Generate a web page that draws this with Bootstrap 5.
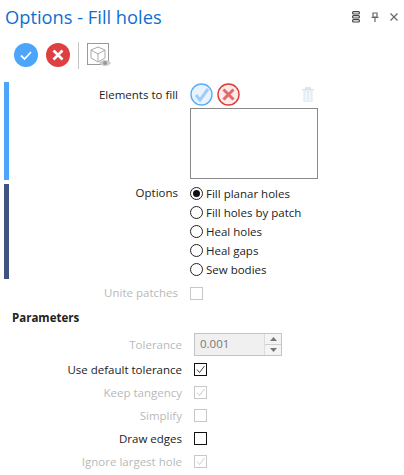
<!DOCTYPE html>
<html lang="en">
<head>
    <meta charset="UTF-8">
    <meta name="viewport" content="width=device-width, initial-scale=1.0">
    <title>Options - Fill holes</title>
    <link href="https://cdn.jsdelivr.net/npm/bootstrap@5.3.0/dist/css/bootstrap.min.css" rel="stylesheet">
    <style>
        body {
            background: #fff;
            color: #222;
            font-family: "Open Sans", "Noto Sans", sans-serif;
            font-size: 11.5px;
            overflow: hidden;
        }
        .pane { width: 404px; height: 475px; overflow: hidden; }
        .pane-head { height: 33px; padding: 0 6px 0 5px; }
        .pane-title { color: #0f6fd0; font-size: 18.3px; line-height: 33px; margin: 0; font-weight: 400; }
        .pane-tools { gap: 11px; }
        .tool-row { height: 44px; padding-left: 14px; margin-bottom: 5px; }
        .tool-sep { width: 1px; height: 27px; background: #c4c4c4; margin: 0 8px 0 8px; }
        .section-blue, .section-navy { margin-left: 4px; border-left: 5px solid; }
        .section-blue { border-color: #4aa5fb; height: 98px; margin-bottom: 4px; }
        .section-navy { border-color: #3f5580; height: 95px; }
        .label-col { width: 169px; text-align: right; flex: none; }
        .label-col2 { width: 182px; text-align: right; flex: none; }
        .label-unite { width: 178px; text-align: right; flex: none; }
        .ctrl-col { margin-left: 12px; }
        .pick-row { width: 128px; height: 25px; }
        .trash-icon { margin-right: 3px; }
        .opt-row { height: 19px; }
        .radio-mark { width: 13px; height: 13px; border: 1px solid #222; border-radius: 50%; flex: none; margin-right: 3px; display: flex; align-items: center; justify-content: center; }
        .radio-mark.on::after { content: ""; width: 7px; height: 7px; border-radius: 50%; background: #111; }
        .list-box { width: 128px; height: 71px; border: 1px solid #8a8a8a; margin-top: 1px; }
        .dim { color: #b9b9b9; }
        .check-mark { width: 13px; height: 13px; border: 1px solid #111; display: flex; flex: none; margin-left: 12px; }
        .check-mark.off { border-color: #c8c8c8; }
        .unite-row { height: 16px; margin-top: 6px; }
        .section-name { font-weight: 700; padding-left: 12px; height: 20px; line-height: 20px; margin-top: 7px; margin-bottom: 5px; }
        .param-row { height: 23px; }
        .param-first { margin-bottom: 2px; }
        .spin-box { width: 88px; height: 23px; margin-left: 12px; border: 1px solid #c4c4c4; background: #f0f0f0; color: #777; padding-left: 5px; line-height: 20px; }
        .spin-btns { width: 17px; border-left: 1px solid #dcdcdc; background: #f4f4f4; }
        .spin-btns span { flex: 1; display: flex; align-items: center; justify-content: center; }
        .spin-btns span + span { border-top: 1px solid #d0d0d0; }
    </style>
</head>
<body>
<div class="pane">
    <div class="pane-head d-flex align-items-center justify-content-between">
        <h1 class="pane-title">Options - Fill holes</h1>
        <div class="pane-tools d-flex align-items-center">
            <svg width="8" height="12" viewBox="0 0 8 12"><g fill="none" stroke="#444" stroke-width="1.2"><rect x=".6" y=".6" width="6.8" height="2.4" rx="1"/><rect x=".6" y="4.6" width="6.8" height="2.4" rx="1"/><rect x=".6" y="8.6" width="6.8" height="2.4" rx="1"/></g></svg>
            <svg width="8" height="10" viewBox="0 0 8 10"><path d="M2 1h4v4H2zM.5 5.5h7M4 5.5V10" fill="none" stroke="#666" stroke-width="1.2"/></svg>
            <svg width="8" height="8" viewBox="0 0 8 8"><path d="M.5.5l7 7M7.5.5l-7 7" stroke="#666" stroke-width="1.2"/></svg>
        </div>
    </div>

    <div class="tool-row d-flex align-items-center">
        <svg width="24" height="24" viewBox="0 0 24 24" class="me-2"><circle cx="12" cy="12" r="12" fill="#4aa5fb"/><path d="M7 12.5l3.5 3.5L17 9" fill="none" stroke="#fff" stroke-width="1.8"/></svg>
        <svg width="24" height="24" viewBox="0 0 24 24"><circle cx="12" cy="12" r="12" fill="#dd4040"/><path d="M7.5 7.5l9 9M16.5 7.5l-9 9" stroke="#fff" stroke-width="2.6"/></svg>
        <div class="tool-sep"></div>
        <svg width="25" height="26" viewBox="0 0 25 26"><rect x=".5" y="1.5" width="21" height="21" fill="none" stroke="#999"/><path d="M11 5l7 3v8l-7 4-7-4V8zM4 8l7 4 7-4M11 12v8" fill="none" stroke="#aaa"/><path d="M12 21c3-4 9-4 12 0-3 4-9 4-12 0z" fill="#ccc"/><circle cx="18" cy="21" r="2" fill="#999"/></svg>
    </div>

    <div class="section-blue d-flex">
        <div class="label-col pt-1">Elements to fill</div>
        <div class="ctrl-col">
            <div class="pick-row d-flex align-items-center">
                <svg width="23" height="23" viewBox="0 0 23 23"><circle cx="11.5" cy="11.5" r="10.5" fill="#e8f3fe" stroke="#5aaefb" stroke-width="1.4"/><path d="M6 12l4 5 8-11" fill="none" stroke="#9fcdf8" stroke-width="3"/></svg>
                <svg width="23" height="23" viewBox="0 0 23 23" class="ms-1"><circle cx="11.5" cy="11.5" r="10.5" fill="#fdeaea" stroke="#dd3a3a" stroke-width="1.4"/><path d="M6.5 6.5l10 10M16.5 6.5l-10 10" stroke="#e46a6a" stroke-width="3"/></svg>
                <svg width="14" height="17" viewBox="0 0 15 18" class="ms-auto trash-icon"><path d="M1 4h13M5 4V2h5v2" fill="none" stroke="#d6dee8" stroke-width="1.5"/><path d="M2.5 5h10v12h-10z" fill="#e6edf5"/><path d="M5.5 6v10M9.5 6v10" stroke="#fff"/></svg>
            </div>
            <div class="list-box"></div>
        </div>
    </div>

    <div class="section-navy d-flex">
        <div class="label-col"><div class="opt-row">Options</div></div>
        <div class="ctrl-col">
            <div class="opt-row d-flex align-items-center"><span class="radio-mark on"></span>Fill planar holes</div>
            <div class="opt-row d-flex align-items-center"><span class="radio-mark"></span>Fill holes by patch</div>
            <div class="opt-row d-flex align-items-center"><span class="radio-mark"></span>Heal holes</div>
            <div class="opt-row d-flex align-items-center"><span class="radio-mark"></span>Heal gaps</div>
            <div class="opt-row d-flex align-items-center"><span class="radio-mark"></span>Sew bodies</div>
        </div>
    </div>

    <div class="unite-row d-flex align-items-center">
        <div class="label-unite dim">Unite patches</div>
        <span class="check-mark off"></span>
    </div>

    <div class="section-name">Parameters</div>

    <div class="param-row param-first d-flex align-items-center">
        <div class="label-col2 dim">Tolerance</div>
        <div class="spin-box d-flex justify-content-between">
            <span>0.001</span>
            <div class="spin-btns d-flex flex-column">
                <span><svg width="7" height="4" viewBox="0 0 7 4"><path d="M3.5 0L7 4H0z" fill="#777"/></svg></span>
                <span><svg width="7" height="4" viewBox="0 0 7 4"><path d="M3.5 4L7 0H0z" fill="#777"/></svg></span>
            </div>
        </div>
    </div>
    <div class="param-row d-flex align-items-center">
        <div class="label-col2">Use default tolerance</div>
        <span class="check-mark"><svg width="11" height="11" viewBox="0 0 11 11"><path d="M2 5.5l2.5 3L9.5 2" fill="none" stroke="#444"/></svg></span>
    </div>
    <div class="param-row d-flex align-items-center">
        <div class="label-col2 dim">Keep tangency</div>
        <span class="check-mark off"><svg width="11" height="11" viewBox="0 0 11 11"><path d="M2 5.5l2.5 3L9.5 2" fill="none" stroke="#ccc"/></svg></span>
    </div>
    <div class="param-row d-flex align-items-center">
        <div class="label-col2 dim">Simplify</div>
        <span class="check-mark off"></span>
    </div>
    <div class="param-row d-flex align-items-center">
        <div class="label-col2">Draw edges</div>
        <span class="check-mark"></span>
    </div>
    <div class="param-row d-flex align-items-center">
        <div class="label-col2 dim">Ignore largest hole</div>
        <span class="check-mark off"><svg width="11" height="11" viewBox="0 0 11 11"><path d="M2 5.5l2.5 3L9.5 2" fill="none" stroke="#ccc"/></svg></span>
    </div>
</div>
<script src="https://cdn.jsdelivr.net/npm/bootstrap@5.3.0/dist/js/bootstrap.bundle.min.js"></script>
</body>
</html>
